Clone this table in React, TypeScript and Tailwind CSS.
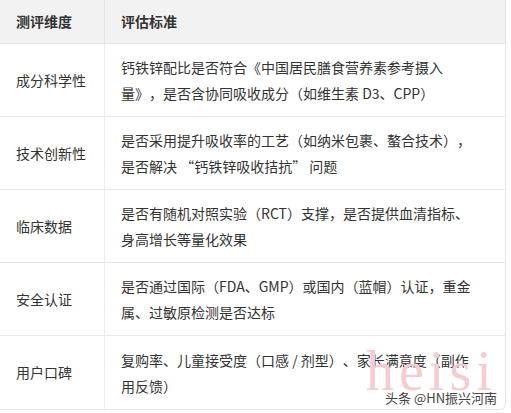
const rows: [string, string][] = [
  ['成分科学性', '钙铁锌配比是否符合《中国居民膳食营养素参考摄入量》，是否含协同吸收成分（如维生素 D3、CPP）'],
  ['技术创新性', '是否采用提升吸收率的工艺（如纳米包裹、螯合技术），是否解决 “钙铁锌吸收拮抗” 问题'],
  ['临床数据', '是否有随机对照实验（RCT）支撑，是否提供血清指标、身高增长等量化效果'],
  ['安全认证', '是否通过国际（FDA、GMP）或国内（蓝帽）认证，重金属、过敏原检测是否达标'],
  ['用户口碑', '复购率、儿童接受度（口感 / 剂型）、家长满意度（副作用反馈）'],
];

export default function App() {
  return (
    <div
      className="relative w-[511px] h-[413px] bg-white overflow-hidden text-[#333] [text-spacing-trim:space-all]"
      style={{ fontFamily: '"Noto Sans CJK SC", "Noto Sans", sans-serif' }}
    >
      <div className="w-[506px] border-r border-b border-[#e6e6e6] rounded-br-md overflow-hidden">
        <div className="flex h-[44px] bg-[#f2f2f2] border-b border-[#e3e3e3] text-[14px] font-bold">
          <div className="w-[105px] shrink-0 flex items-center pl-4 border-r border-[#e3e3e3]">测评维度</div>
          <div className="flex-1 flex items-center pl-4">评估标准</div>
        </div>
        {rows.map(([k, v], i) => (
          <div
            key={k}
            className={`flex h-[73px] text-[14px] ${i < rows.length - 1 ? 'border-b border-[#e8e8e8]' : ''}`}
          >
            <div className="w-[105px] shrink-0 flex items-center pl-4 border-r border-[#ececec]">{k}</div>
            <div className="flex-1 flex items-center pl-4">
              <p className="w-[356px] leading-[26px]">{v}</p>
            </div>
          </div>
        ))}
      </div>
      <div
        className="absolute left-[366px] top-[343px] text-[56px] leading-none text-[#f5cdd1] tracking-[5px]"
        style={{ fontFamily: '"Liberation Serif", serif' }}
      >
        heisi
      </div>
      <div className="absolute left-[385px] top-[391px] text-[13px] leading-none text-[#444] [text-shadow:0_0_2px_#fff]">
        头条 @HN振兴河南
      </div>
    </div>
  );
}
